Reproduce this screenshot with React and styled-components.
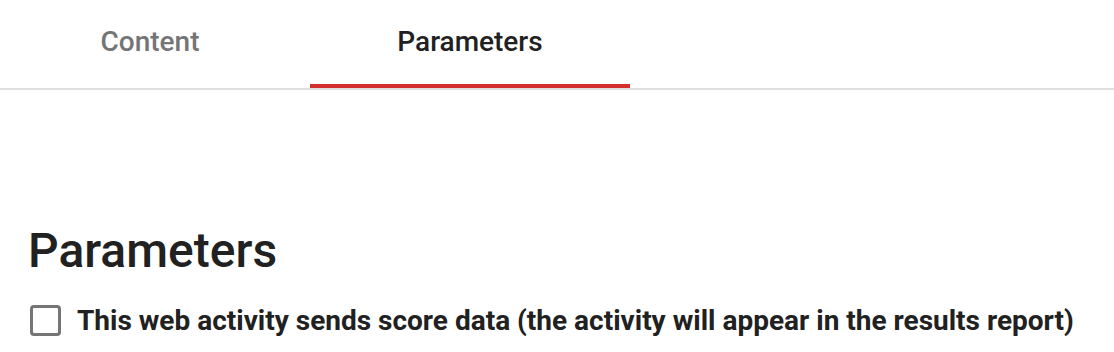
import React, { useState } from "react";
import styled, { createGlobalStyle } from "styled-components";

const GlobalStyle = createGlobalStyle`
  body {
    margin: 0;
    background: #ffffff;
    font-family: Roboto, "Liberation Sans", Arial, sans-serif;
  }
`;

const Page = styled.div`
  width: 1114px;
  height: 352px;
  overflow: hidden;
  background: #ffffff;
`;

const TabList = styled.div`
  display: grid;
  grid-template-columns: 300px 320px;
  column-gap: 10px;
  border-bottom: 2px solid #e0e0e0;
`;

const Tab = styled.button`
  position: relative;
  height: 88px;
  padding: 25px 0 30px;
  border: none;
  background: transparent;
  font-family: inherit;
  font-size: 28px;
  font-weight: 500;
  line-height: normal;
  color: ${({ $active }) => ($active ? "#212121" : "#757575")};
  cursor: pointer;

  &::after {
    content: "";
    position: absolute;
    left: 0;
    right: 0;
    bottom: 0;
    height: 4px;
    background: ${({ $active }) => ($active ? "#d32f2f" : "transparent")};
  }
`;

const Panel = styled.section`
  padding: 133px 28px 0;
`;

const Heading = styled.h1`
  margin: 0;
  font-size: 48px;
  font-weight: 500;
  line-height: 56px;
  color: #212121;
`;

const CheckRow = styled.label`
  display: flex;
  align-items: center;
  gap: 16px;
  margin-top: 25px;
  padding-left: 2px;
  cursor: pointer;
`;

const Box = styled.span`
  box-sizing: border-box;
  width: 31px;
  height: 31px;
  border: 3.5px solid #757575;
  border-radius: 4px;
  background: ${({ $checked }) => ($checked ? "#757575" : "#ffffff")};
  flex-shrink: 0;
`;

const LabelText = styled.span`
  font-size: 28px;
  font-weight: 700;
  line-height: normal;
  color: #212121;
`;

export default function App() {
  const [tab, setTab] = useState("parameters");
  const [sendsScore, setSendsScore] = useState(false);

  return (
    <Page>
      <GlobalStyle />
      <TabList>
        <Tab $active={tab === "content"} onClick={() => setTab("content")}>
          Content
        </Tab>
        <Tab $active={tab === "parameters"} onClick={() => setTab("parameters")}>
          Parameters
        </Tab>
      </TabList>
      <Panel>
        <Heading>Parameters</Heading>
        <CheckRow onClick={() => setSendsScore(!sendsScore)}>
          <Box $checked={sendsScore} />
          <LabelText>
            This web activity sends score data (the activity will appear in the
            results report)
          </LabelText>
        </CheckRow>
      </Panel>
    </Page>
  );
}
